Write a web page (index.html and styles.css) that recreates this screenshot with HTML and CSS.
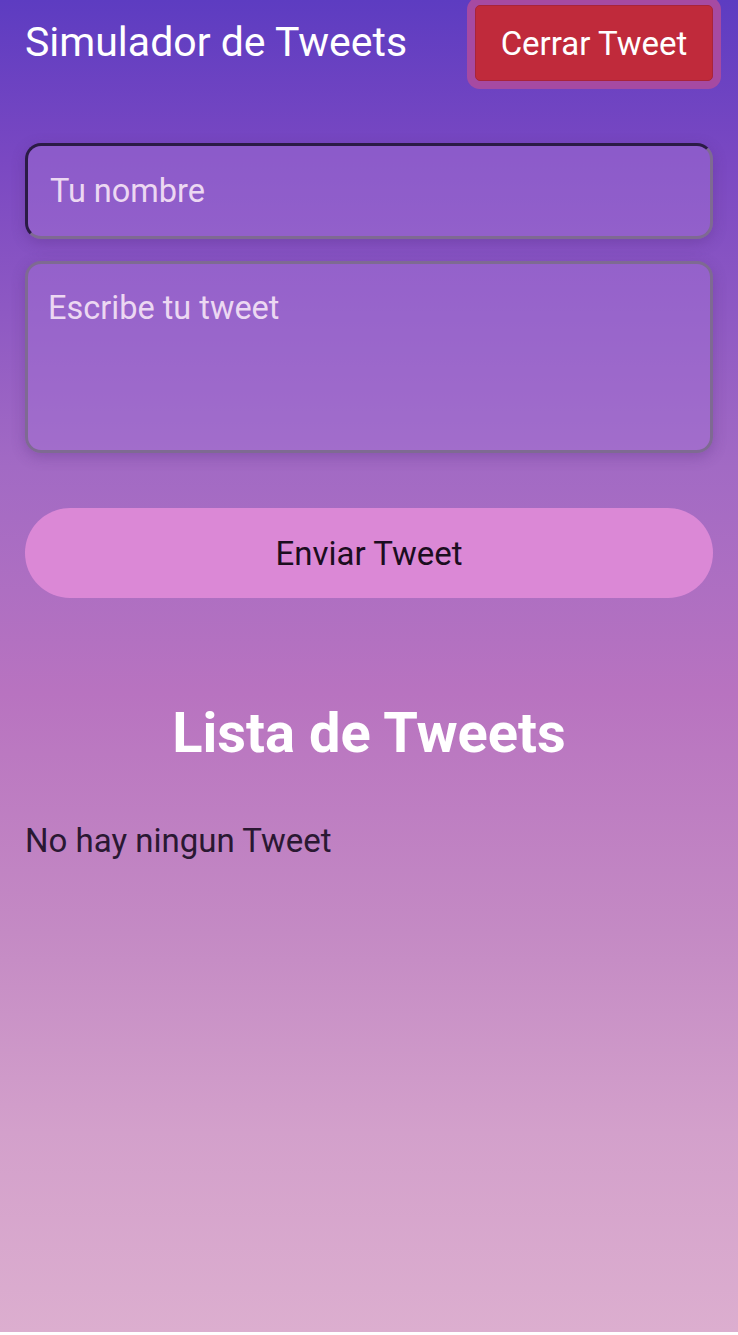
FILE: index.html
```html
<!DOCTYPE html>
<html lang="es">
<head>
<meta charset="utf-8">
<title>Simulador de Tweets</title>
<link rel="stylesheet" href="styles.css">
</head>
<body>
<div class="page">
  <header class="topbar">
    <h1 class="brand">Simulador de Tweets</h1>
    <button class="btn-close">Cerrar Tweet</button>
  </header>
  <form class="tweet-form">
    <input class="field field-name" type="text" placeholder="Tu nombre">
    <textarea class="field field-tweet" placeholder="Escribe tu tweet"></textarea>
    <button type="button" class="btn-send">Enviar Tweet</button>
  </form>
  <section class="list">
    <h2 class="list-title">Lista de Tweets</h2>
    <p class="empty">No hay ningun Tweet</p>
  </section>
</div>
</body>
</html>
```
FILE: styles.css
```css
html, body {
  margin: 0;
  padding: 0;
}
body {
  font-family: Roboto, "Noto Sans", sans-serif;
  background: #fff;
}
.page {
  height: 1332px;
  box-sizing: border-box;
  padding: 0 25px;
  background: linear-gradient(180deg, #5d3cc1 0%, #7a48c2 12%, #a26ac4 35%, #b873c0 52%, #c48ac4 70%, #d3a0cb 85%, #dcaecf 100%);
}
.topbar {
  display: flex;
  justify-content: space-between;
  align-items: flex-start;
  padding-top: 5px;
}
.brand {
  margin: 14px 0 0 0;
  font-weight: 400;
  font-size: 41px;
  line-height: 47px;
  color: #fff;
}
.btn-close {
  width: 238px;
  height: 76px;
  background: #c02a3b;
  color: #fff;
  border: 1px solid #a8243a;
  border-radius: 5px;
  box-shadow: 0 0 0 8px #a64aa2;
  font-family: Roboto, sans-serif;
  font-size: 33px;
  padding: 0;
}
.tweet-form {
  display: flex;
  flex-direction: column;
  margin-top: 62px;
}
.field {
  box-sizing: border-box;
  width: 100%;
  font-family: Roboto, sans-serif;
  font-size: 32.5px;
  color: #fff;
  border-radius: 16px;
  background: rgba(165, 115, 212, 0.45);
  outline: none;
  box-shadow: 0 4px 14px rgba(80, 40, 120, 0.3);
}
.field::placeholder {
  color: #ecd8f2;
}
.field-name {
  height: 96px;
  padding: 0 22px;
  border: 3px solid #7e6a92;
  border-top-color: #2b1b45;
  border-left-color: #2b1b45;
}
.field-tweet {
  margin-top: 22px;
  height: 192px;
  padding: 25px 20px;
  border: 3px solid #7e6a92;
  resize: none;
}
.btn-send {
  margin-top: 55px;
  height: 90px;
  border: none;
  border-radius: 45px;
  background: #db88d6;
  color: #1b0d20;
  font-family: Roboto, sans-serif;
  font-size: 33px;
  padding: 0;
}
.list-title {
  margin: 102px 0 0 0;
  text-align: center;
  font-size: 56px;
  line-height: 66px;
  font-weight: 700;
  color: #fff;
}
.empty {
  margin: 56px 0 0 0;
  font-size: 33px;
  line-height: 38px;
  color: #2a1832;
}
```
